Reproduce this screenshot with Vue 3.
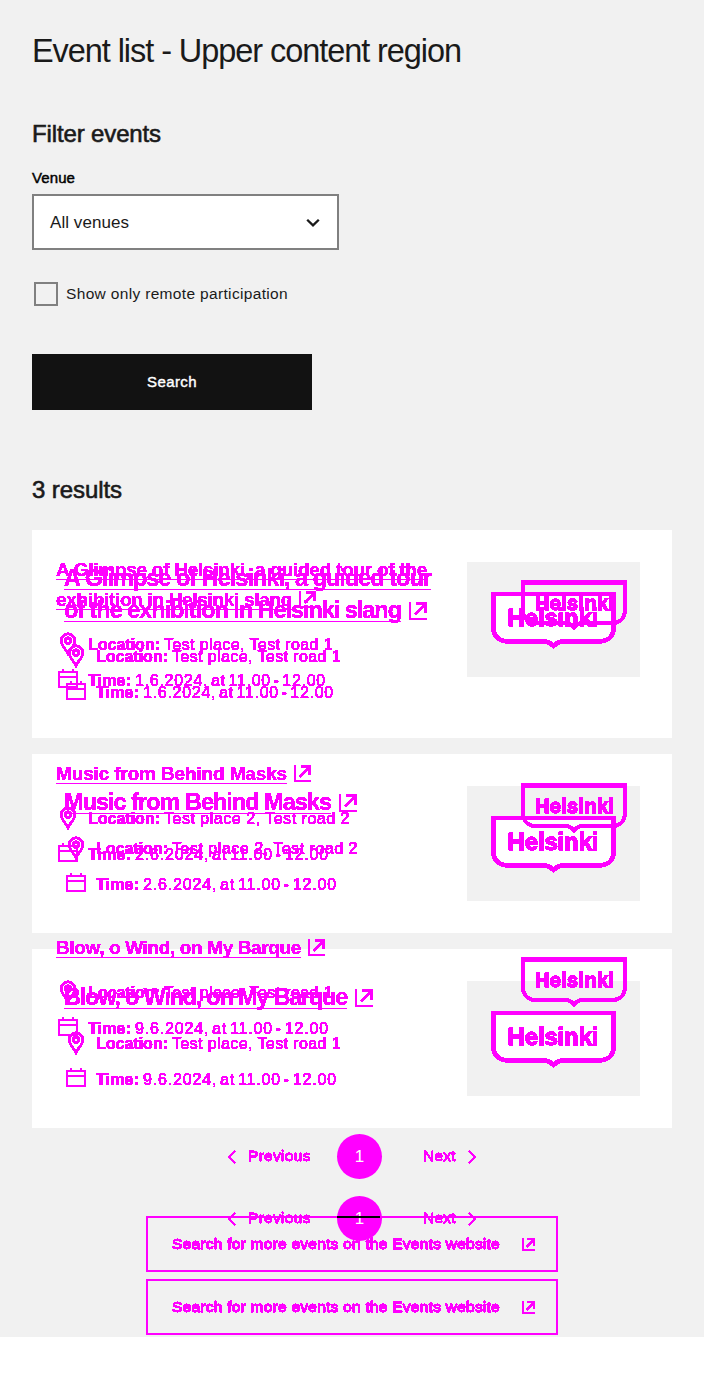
<script setup>
import { h } from 'vue'

const events = [
  {
    lines: [['A Glimpse of Helsinki, a guided tour', 367], ['of the exhibition in Helsinki slang', 337]],
    ghostLines: [['A Glimpse of Helsinki, a guided tour of the', 371], ['exhibition in Helsinki slang', 236]],
    place: ['Test place, Test road 1', 169],
    time: ['1.6.2024, at 11.00 - 12.00', 191],
  },
  {
    lines: [['Music from Behind Masks', 267]],
    ghostLines: [['Music from Behind Masks', 231]],
    place: ['Test place 2, Test road 2', 186],
    time: ['2.6.2024, at 11.00 - 12.00', 194],
  },
  {
    lines: [['Blow, o Wind, on My Barque', 283]],
    ghostLines: [['Blow, o Wind, on My Barque', 245]],
    place: ['Test place, Test road 1', 169],
    time: ['9.6.2024, at 11.00 - 12.00', 194],
  },
]

// Spreads the letters so that the text takes the given width in pixels.
const vFit = {
  mounted(el, { value }) {
    const natural = el.getBoundingClientRect().width
    el.style.letterSpacing = (value - natural) / el.textContent.length + 'px'
  },
}

const line = (d, w = 2) => h('path', { d, fill: 'none', stroke: 'currentColor', 'stroke-width': w })

const LinkIcon = () =>
  h('svg', { viewBox: '0 0 18 18' }, [line('M1 0V17H18', 2.2), line('M6.2 12.3L16 2.5M7.5 1.3H16.7V10.5', 2.4)])
const PinIcon = () =>
  h('svg', { viewBox: '0 0 24 24', width: 24, height: 24 }, [
    line('M12 21.3C10 17.5 5.2 14 5.2 8.7A6.8 6.8 0 0 1 18.8 8.7C18.8 14 14 17.5 12 21.3Z', 2.4),
    h('circle', { cx: 12, cy: 8.7, r: 2.7, fill: 'none', stroke: 'currentColor', 'stroke-width': 2.4 }),
  ])
const CalendarIcon = () =>
  h('svg', { viewBox: '0 0 24 24', width: 24, height: 24 }, [
    line('M3 4H21V19H3ZM3 9H21M7 1V4M17 1V4'),
  ])
const Chevron = () => h('svg', { viewBox: '0 0 10 14', width: 10, height: 14 }, [line('M8 1.2L2.2 7L8 12.8', 1.7)])
const Pager = () =>
  h('nav', { class: 'pager' }, [
    h(Chevron),
    h('span', { class: 'prev' }, 'Previous'),
    h('b', { class: 'page' }, '1'),
    h('span', { class: 'next' }, 'Next'),
    h(Chevron, { class: 'flip' }),
  ])
</script>

<template>
  <div class="canvas">
    <svg class="defs" width="0" height="0">
      <filter id="hard" color-interpolation-filters="sRGB">
        <feComponentTransfer><feFuncA type="discrete" tableValues="0 1 1 1 1 1" /></feComponentTransfer>
      </filter>
    </svg>
    <main class="base">
      <h1><span v-fit="429">Event list - Upper content region</span></h1>
      <h2 class="filter-title"><span v-fit="129">Filter events</span></h2>
      <label class="venue"><span v-fit="43">Venue</span></label>
      <div class="select">
        <span v-fit="79">All venues</span>
        <svg width="14" height="10" viewBox="0 0 14 10"><path d="M1.2 1.7L7 7.4L12.8 1.7" fill="none" stroke="#1a1a1a" stroke-width="2.3" /></svg>
      </div>
      <div class="check"><i></i><span v-fit="222">Show only remote participation</span></div>
      <div class="search"><span v-fit="50">Search</span></div>
      <h2 class="results"><span v-fit="90">3 results</span></h2>

      <section class="cards">
        <article v-for="(e, i) in events" :key="i" class="card">
          <div class="info">
            <h3>
              <div v-for="(l, n) in e.lines" :key="n" class="tline">
                <span v-fit="l[1]">{{ l[0] }}</span>
                <LinkIcon v-if="n === e.lines.length - 1" class="link" />
              </div>
            </h3>
            <p><PinIcon /><b v-fit="72">Location:</b><span v-fit="e.place[1]">{{ e.place[0] }}</span></p>
            <p><CalendarIcon /><b v-fit="43">Time:</b><span class="time" v-fit="e.time[1]">{{ e.time[0] }}</span></p>
          </div>
          <div class="image">
            <svg width="125" height="58" viewBox="0 0 125 58">
              <path d="M2.5 2H122.5V36C122.5 44 117 49.5 107 49.5H72Q67 49.5 62.5 54Q58 49.5 53 49.5H18C8 49.5 2.5 44 2.5 36Z" fill="#fff" stroke="#f0f" stroke-width="4.8" />
              <text class="hard" x="16.5" y="34" textLength="91" font-size="24">Helsinki</text>
            </svg>
          </div>
        </article>
      </section>

      <Pager class="pager-base" />
      <div class="more more-base">
        <span v-fit="328">Search for more events on the Events website</span><LinkIcon />
      </div>
    </main>

    <div class="ghost">
      <article v-for="(e, i) in events" :key="i" class="gcard">
        <div class="info">
          <h3>
            <div v-for="(l, n) in e.ghostLines" :key="n" class="tline">
              <span v-fit="l[1]">{{ l[0] }}</span>
              <LinkIcon v-if="n === e.ghostLines.length - 1" class="link" />
            </div>
          </h3>
          <p><PinIcon /><b v-fit="72">Location:</b><span v-fit="e.place[1]">{{ e.place[0] }}</span></p>
          <p><CalendarIcon /><b v-fit="43">Time:</b><span class="time" v-fit="e.time[1]">{{ e.time[0] }}</span></p>
        </div>
        <svg class="glogo" width="106" height="51" viewBox="0 0 106 51">
          <path d="M2 2.5H104V30C104 38 99 43 91 43H61Q57 43 53 47.5Q49 43 45 43H15C7 43 2 38 2 30Z" fill="none" stroke="#f0f" stroke-width="4.2" />
          <text class="hard" x="14" y="29.5" textLength="79" font-size="20">Helsinki</text>
        </svg>
      </article>
      <Pager class="pager-ghost" />
      <div class="more">
        <span v-fit="328">Search for more events on the Events website</span><LinkIcon />
        <i class="crossing"></i>
      </div>
    </div>
  </div>
</template>

<style>
html,
body {
  background: #fff;
}
.pager {
  display: flex;
  align-items: center;
  height: 45px;
  padding-left: 227px;
  font-size: 15.5px;
  -webkit-text-stroke: 0.4px #f0f;
}
.pager > svg,
.pager > span {
  filter: url(#hard);
}
.pager > span {
  padding-bottom: 1px;
}
.pager .prev {
  width: 63px;
  margin-left: 11px;
  letter-spacing: 0.3px;
}
.pager .page {
  display: flex;
  align-items: center;
  justify-content: center;
  width: 45px;
  height: 45px;
  margin-left: 26px;
  border-radius: 50%;
  background: #f0f;
  color: #fff;
  font-size: 17px;
  font-weight: 400;
  -webkit-text-stroke: 0;
}
.pager .next {
  width: 33px;
  margin-left: 41px;
  letter-spacing: 0.2px;
}
.pager .flip {
  margin-left: 11px;
  transform: scaleX(-1);
}
</style>

<style scoped>
.canvas {
  position: relative;
  width: 704px;
  height: 1337px;
  overflow: hidden;
  background: #f1f1f1;
  color: #1a1a1a;
  font-family: 'Liberation Sans', Arial, sans-serif;
}
.defs {
  position: absolute;
}
.info,
.hard,
.more > span,
.more > svg {
  filter: url(#hard);
}
h1,
h2,
h3,
p {
  margin: 0;
  font-weight: 400;
}
span,
b {
  white-space: nowrap;
}
h1 span,
h2 span,
.venue span {
  display: inline-block;
}
.base {
  display: flex;
  flex-direction: column;
}
h1 {
  margin: 31px 32px 0;
  font-size: 32.5px;
  line-height: 40px;
}
h2 {
  margin: 0 32px;
  font-size: 24px;
  line-height: 32px;
  -webkit-text-stroke: 0.6px #1a1a1a;
}
.filter-title {
  margin-top: 47px;
}
.venue {
  margin: 18px 32px 0;
  height: 20px;
  font-size: 15px;
  line-height: 20px;
  color: #000;
  -webkit-text-stroke: 0.45px #000;
}
.select {
  box-sizing: border-box;
  display: flex;
  align-items: center;
  justify-content: space-between;
  width: 307px;
  height: 56px;
  margin: 6px 32px 0;
  padding: 1px 17px 0 16px;
  border: 2px solid #808080;
  background: #fff;
  font-size: 17px;
}
.check {
  display: flex;
  align-items: center;
  gap: 8px;
  height: 24px;
  margin: 32px 34px 0;
  font-size: 15.5px;
}
.check i {
  box-sizing: border-box;
  width: 24px;
  height: 24px;
  border: 2px solid #808080;
}
.search {
  box-sizing: border-box;
  display: flex;
  align-items: center;
  justify-content: center;
  width: 280px;
  height: 56px;
  margin: 48px 32px 0;
  padding-bottom: 2px;
  background: #121212;
  color: #fff;
  font-size: 15px;
  -webkit-text-stroke: 0.4px #fff;
}
.results {
  margin-top: 64px;
}
.cards {
  display: flex;
  flex-direction: column;
  gap: 16px;
  margin: 24px 32px 0;
  color: #f0f;
}
.card {
  display: flex;
  justify-content: space-between;
  align-items: flex-start;
  padding: 32px;
  background: #fff;
}
.tline {
  display: flex;
  align-items: center;
  height: 32px;
  font-size: 23.5px;
  font-weight: 700;
}
.tline span {
  line-height: 32px;
  text-decoration: underline 1px;
  text-underline-offset: 3px;
  text-decoration-skip-ink: none;
}
.link {
  width: 18px;
  height: 18px;
  margin: 2px 0 0 8px;
}
h3 {
  margin-bottom: 16px;
}
p {
  display: flex;
  align-items: center;
  height: 28px;
  font-size: 16px;
  -webkit-text-stroke: 0.2px #f0f;
}
p b,
p span {
  padding-top: 2px;
}
p + p {
  margin-top: 8px;
}
p svg {
  margin-right: 8px;
}
p b {
  margin-right: 4px;
}
.time {
  word-spacing: -2.5px;
}
.image {
  display: flex;
  align-items: flex-start;
  width: 173px;
  height: 115px;
  background: #f1f1f1;
}
.image svg {
  display: block;
  margin: 30px auto 0 24px;
}
svg path {
  shape-rendering: crispEdges;
}
.select path {
  shape-rendering: auto;
}
svg text {
  fill: #f0f;
  stroke: #f0f;
  stroke-width: 0.8px;
  font-weight: 700;
}
.pager-base {
  margin-top: 68px;
  color: #f0f;
}
.more {
  position: relative;
  box-sizing: border-box;
  display: flex;
  align-items: center;
  width: 412px;
  height: 56px;
  margin: 37px 0 0 146px;
  padding: 0 21px 0 24px;
  justify-content: space-between;
  border: 2px solid #f0f;
  color: #f0f;
  font-size: 15.5px;
  -webkit-text-stroke: 0.65px #f0f;
}
.more svg {
  width: 13px;
  height: 13px;
}
.more-base {
  margin-top: 38px;
}
.ghost {
  position: absolute;
  inset: 0;
  padding-top: 554px;
  color: #f0f;
}
.gcard {
  display: flex;
  justify-content: space-between;
  align-items: flex-start;
  margin: 0 77px 64px 56px;
}
.ghost .tline {
  height: 30px;
  font-size: 19px;
}
.ghost .tline span {
  padding-top: 2px;
}
.ghost .link {
  width: 17px;
  height: 17px;
  margin: 0 0 0 7px;
}
.glogo {
  margin-top: 25px;
}
.gcard:first-child .glogo {
  margin-top: 26px;
}
.pager-ghost {
  margin-top: 92px;
}
.gcard:nth-child(3) {
  margin-bottom: 0;
}
.crossing {
  position: absolute;
  top: -2px;
  left: 189px;
  width: 43px;
  height: 2px;
  background: #000;
}
</style>
